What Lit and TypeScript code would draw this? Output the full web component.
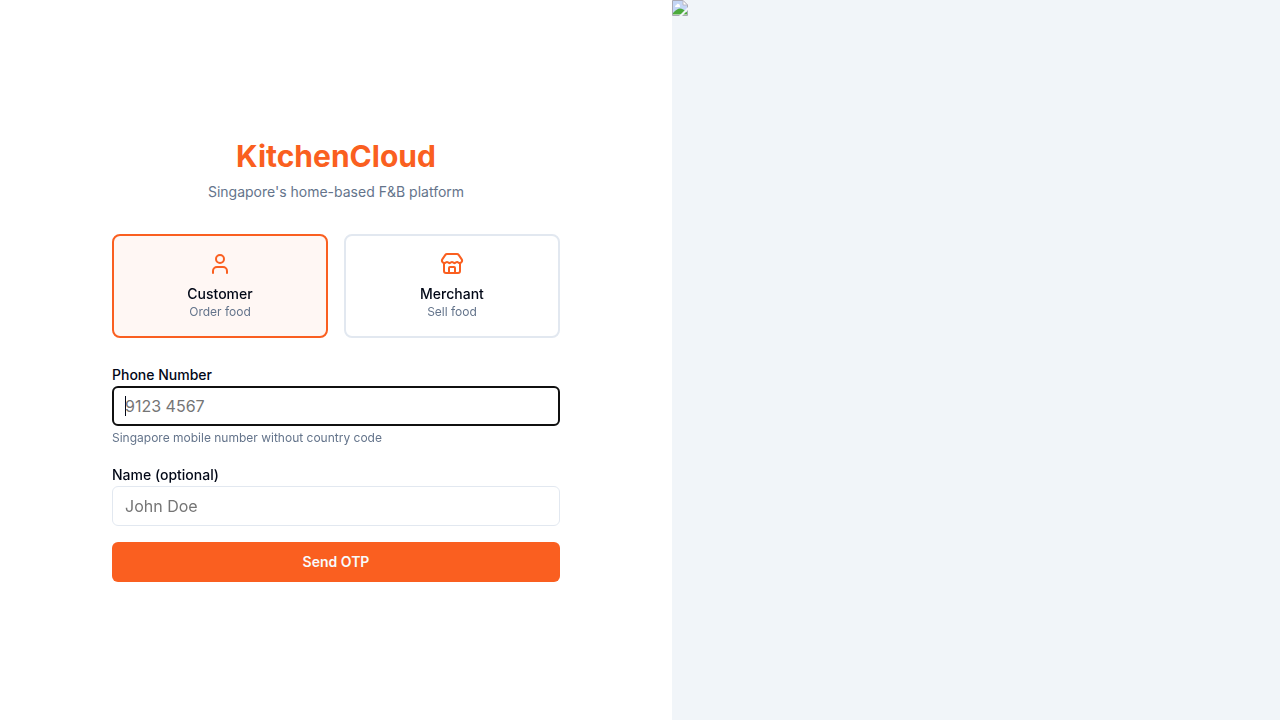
import { LitElement, html, css, svg } from "lit";
import { customElement, state, query } from "lit/decorators.js";

type Role = "customer" | "merchant";

const userIcon = svg`
  <path d="M19 21v-2a4 4 0 0 0-4-4H9a4 4 0 0 0-4 4v2" />
  <circle cx="12" cy="7" r="4" />
`;

const storeIcon = svg`
  <path d="M15 21v-5a1 1 0 0 0-1-1h-4a1 1 0 0 0-1 1v5" />
  <path d="M17.774 10.31a1.12 1.12 0 0 0-1.549 0 2.5 2.5 0 0 1-3.451 0 1.12 1.12 0 0 0-1.548 0 2.5 2.5 0 0 1-3.452 0 1.12 1.12 0 0 0-1.549 0 2.5 2.5 0 0 1-3.77-3.248l2.889-4.184A2 2 0 0 1 7 2h10a2 2 0 0 1 1.653.873l2.895 4.192a2.5 2.5 0 0 1-3.774 3.244" />
  <path d="M4 10.95V19a2 2 0 0 0 2 2h12a2 2 0 0 0 2-2v-8.05" />
`;

const roles = [
  { id: "customer" as Role, name: "Customer", note: "Order food", icon: userIcon },
  { id: "merchant" as Role, name: "Merchant", note: "Sell food", icon: storeIcon },
];

@customElement("app-root")
export class AppRoot extends LitElement {
  @state() private role: Role = "customer";
  @query("#phone") private phone!: HTMLInputElement;

  static styles = css`
    :host {
      --primary: #fa5f20;
      --text: #020817;
      --muted: #64748b;
      --line: #e2e8f0;
      display: grid;
      grid-template-columns: minmax(0, 21fr) minmax(0, 19fr);
      min-height: 100vh;
      background: #fff;
      color: var(--text);
      font-family: Inter, sans-serif;
      font-size: 16px;
      line-height: 24px;
    }
    * {
      box-sizing: border-box;
    }
    .main {
      display: flex;
      align-items: center;
      justify-content: center;
      padding: 32px;
    }
    .panel {
      width: 100%;
      max-width: 448px;
    }
    .head {
      margin-bottom: 32px;
      text-align: center;
    }
    .title {
      margin: 0 0 8px;
      color: var(--primary);
      font-size: 30px;
      font-weight: 700;
      line-height: 36px;
    }
    .tagline {
      margin: 0;
      color: var(--muted);
      font-size: 14px;
      line-height: 20px;
    }
    .roles {
      display: grid;
      grid-template-columns: 1fr 1fr;
      gap: 16px;
      margin: 0 0 24px;
      padding: 0;
      border: 0;
    }
    .role {
      position: relative;
      display: flex;
      flex-direction: column;
      align-items: center;
      padding: 16px;
      border: 2px solid var(--line);
      border-radius: 8px;
      cursor: pointer;
    }
    .role:has(.radio:checked) {
      border-color: var(--primary);
      background: #fff7f4;
    }
    .radio {
      position: absolute;
      inset: 0;
      margin: 0;
      appearance: none;
      cursor: pointer;
    }
    .icon {
      width: 24px;
      height: 24px;
      margin-bottom: 8px;
      fill: none;
      stroke: var(--primary);
      stroke-width: 2;
      stroke-linecap: round;
      stroke-linejoin: round;
    }
    .role-name {
      font-size: 14px;
      font-weight: 500;
      line-height: 20px;
    }
    .note {
      margin: 0;
      color: var(--muted);
      font-size: 12px;
      line-height: 16px;
    }
    .form {
      display: flex;
      flex-direction: column;
      gap: 16px;
    }
    .label {
      font-size: 14px;
      font-weight: 500;
      line-height: 14px;
    }
    .input {
      display: block;
      width: 100%;
      height: 40px;
      padding: 8px 12px;
      border: 1px solid var(--line);
      border-radius: 6px;
      background: #fff;
      color: inherit;
      font: inherit;
    }
    .input:focus {
      outline: 2px solid #101010;
      outline-offset: -2px;
    }
    /* steady caret while the focused field is empty */
    .input:focus:placeholder-shown {
      background: linear-gradient(#020817, #020817) 12px center / 1px 20px no-repeat #fff;
      caret-color: transparent;
    }
    .hint {
      margin-top: 4px;
    }
    .submit {
      height: 40px;
      padding: 8px 16px;
      border: 0;
      border-radius: 6px;
      background: var(--primary);
      color: #f8fafc;
      font-family: inherit;
      font-size: 14px;
      font-weight: 600;
      line-height: 20px;
      cursor: pointer;
    }
    .cover {
      background: #f1f5f9;
    }
    .missing {
      display: block;
      width: 16px;
      height: 16px;
    }
  `;

  firstUpdated() {
    this.phone.focus();
  }

  render() {
    return html`
      <main class="main">
        <div class="panel">
          <header class="head">
            <h1 class="title">KitchenCloud</h1>
            <p class="tagline">Singapore's home-based F&amp;B platform</p>
          </header>
          <form @submit=${(e: Event) => e.preventDefault()}>
            <fieldset class="roles" aria-label="Account type">
              ${roles.map(
                (r) => html`
                  <label class="role">
                    <input
                      class="radio"
                      type="radio"
                      name="role"
                      .value=${r.id}
                      .checked=${this.role === r.id}
                      @change=${() => (this.role = r.id)}
                    />
                    <svg class="icon" viewBox="0 0 24 24" aria-hidden="true">${r.icon}</svg>
                    <span class="role-name">${r.name}</span>
                    <span class="note">${r.note}</span>
                  </label>
                `
              )}
            </fieldset>
            <div class="form">
              <div>
                <label class="label" for="phone">Phone Number</label>
                <input class="input" id="phone" type="tel" placeholder="9123 4567" aria-describedby="hint" />
                <p class="note hint" id="hint">Singapore mobile number without country code</p>
              </div>
              <div>
                <label class="label" for="name">Name (optional)</label>
                <input class="input" id="name" type="text" placeholder="John Doe" />
              </div>
              <button class="submit" type="submit">Send OTP</button>
            </div>
          </form>
        </div>
      </main>
      <aside class="cover">
        <svg class="missing" viewBox="0 0 16 16" aria-hidden="true">
          <path d="M.5.5H11L15.5 5V15.5H.5Z" fill="#fff" stroke="#a9a9b4" />
          <path d="M1 1H11V5H15V14H1Z" fill="#c4d6f6" />
          <path d="M3 7Q3 5 4.500 5Q5 3 6.500 4Q8 4 8 7Z" fill="#fff" />
          <path d="M1 14.500V13Q5 8.500 8 8.500Q11 8.500 15 12.500V14.500Z" fill="#4caa3c" />
          <path d="M11 .5V5H15.500Z" fill="#fff" stroke="#b9b9c4" />
          <path d="M16 7L7 16H10L16 10Z" fill="#f1f5f9" />
        </svg>
      </aside>
    `;
  }
}
